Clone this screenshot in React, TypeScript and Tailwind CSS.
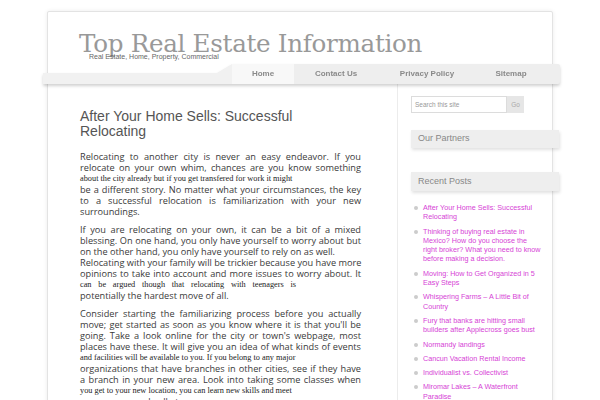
import React from 'react';

type Line = { t: string; k: 'j' | 'l' | 's' | 'sj' };

const PARAGRAPHS: Line[][] = [
  [
    { t: 'Relocating to another city is never an easy endeavor. If you', k: 'j' },
    { t: 'relocate on your own whim, chances are you know something', k: 'j' },
    { t: 'about the city already but if you get transfered for work it might', k: 's' },
    { t: 'be a different story. No matter what your circumstances, the key', k: 'j' },
    { t: 'to a successful relocation is familiarization with your new', k: 'j' },
    { t: 'surroundings.', k: 'l' },
  ],
  [
    { t: 'If you are relocating on your own, it can be a bit of a mixed', k: 'j' },
    { t: 'blessing. On one hand, you only have yourself to worry about but', k: 'j' },
    { t: 'on the other hand, you only have yourself to rely on as well.', k: 'l' },
    { t: 'Relocating with your family will be trickier because you have more', k: 'j' },
    { t: 'opinions to take into account and more issues to worry about. It', k: 'j' },
    { t: 'can be argued though that relocating with teenagers is', k: 'sj' },
    { t: 'potentially the hardest move of all.', k: 'l' },
  ],
  [
    { t: 'Consider starting the familiarizing process before you actually', k: 'j' },
    { t: "move; get started as soon as you know where it is that you'll be", k: 'j' },
    { t: "going. Take a look online for the city or town's webpage, most", k: 'j' },
    { t: 'places have these. It will give you an idea of what kinds of events', k: 'j' },
    { t: 'and facilities will be available to you. If you belong to any major', k: 's' },
    { t: 'organizations that have branches in other cities, see if they have', k: 'j' },
    { t: 'a branch in your new area. Look into taking some classes when', k: 'j' },
    { t: 'you get to your new location, you can learn new skills and meet', k: 's' },
    { t: 'some new people all at once.', k: 'l' },
  ],
];

const RECENT = [
  'After Your Home Sells: Successful Relocating',
  'Thinking of buying real estate in Mexico? How do you choose the right broker? What you need to know before making a decision.',
  'Moving: How to Get Organized in 5 Easy Steps',
  'Whispering Farms – A Little Bit of Country',
  'Fury that banks are hitting small builders after Applecross goes bust',
  'Normandy landings',
  'Cancun Vacation Rental Income',
  'Individualist vs. Collectivist',
  'Miromar Lakes – A Waterfront Paradise',
];

const NAV = [
  { label: 'Home', w: 'w-[62px]', active: true },
  { label: 'Contact Us', w: 'w-[84px]' },
  { label: 'Privacy Policy', w: 'w-[98px]' },
  { label: 'Sitemap', w: 'w-[70px]' },
];

function BodyLine({ line }: { line: Line }) {
  if (line.k === 's' || line.k === 'sj') {
    return (
      <div
        className={
          "h-[11px] leading-[11px] font-['Liberation_Serif',serif] text-[8.3px] text-[#222] whitespace-nowrap " +
          (line.k === 'sj' ? 'w-[216px] text-justify [text-align-last:justify]' : '')
        }
      >
        {line.t}
      </div>
    );
  }
  return (
    <div
      className={
        'h-[11px] leading-[11px] whitespace-nowrap ' +
        (line.k === 'j' ? 'text-justify [text-align-last:justify]' : '')
      }
    >
      {line.t}
    </div>
  );
}

export default function App() {
  return (
    <div className="min-h-screen bg-white pt-[11px] overflow-hidden font-['Liberation_Sans',Arial,sans-serif]">
      <div className="ml-[47px] w-[506px] h-[420px] bg-white border border-[#e3e3e3] rounded-t-[2px] shadow-[0_0_4px_rgba(0,0,0,0.08)]">
        {/* header */}
        <div className="pl-[31px] pt-[17px] h-[52px] relative">
          <div className="font-['DejaVu_Serif',serif] text-[24.6px] leading-[30px] text-[#999] tracking-[-0.3px]">
            Top Real Estate Information
          </div>
          <div className="absolute left-[41px] top-[40px] text-[7px] text-[#666]">
            Real Estate, Home, Property, Commercial
          </div>
        </div>

        {/* nav */}
        <div className="ml-[-5px] mr-[-8px] flex h-[20px] drop-shadow-[0_2px_1.5px_rgba(0,0,0,0.18)]">
          <div className="w-[189px] h-[20px] bg-[#f1f1f1] [clip-path:polygon(0_9px,174px_9px,189px_0,189px_100%,0_100%)]" />
          {NAV.map((n) => (
            <div
              key={n.label}
              className={
                'h-[20px] flex items-center justify-center text-[8px] font-bold text-[#8a8a8a] ' +
                n.w +
                (n.active ? ' bg-[#f8f8f8]' : ' bg-[#eeeeee]')
              }
            >
              {n.label}
            </div>
          ))}
          <div className="flex-1 bg-[#eeeeee] rounded-r-[2px]" />
        </div>

        {/* content */}
        <div className="flex">
          <div className="w-[350px] pl-[32px] pt-[25px]">
            <h2 className="w-[260px] text-[14px] leading-[15px] text-[#555]">
              After Your Home Sells: Successful Relocating
            </h2>
            <div className="mt-[12px] w-[281px] font-['Open_Sans',sans-serif] text-[9.2px] text-[#3a3a3a]">
              {PARAGRAPHS.map((p, i) => (
                <div key={i} className="mb-[7px]">
                  {p.map((l, j) => (
                    <BodyLine key={j} line={l} />
                  ))}
                </div>
              ))}
            </div>
          </div>

          <div className="w-[155px] border-l border-[#ececec] pl-[13px] pt-[12px]">
            <div className="flex h-[17px] w-[113px]">
              <div className="flex-1 border border-[#dcdcdc] bg-white pl-[3px] flex items-center text-[6.5px] text-[#999]">
                Search this site
              </div>
              <div className="w-[17px] bg-[#e6e6e6] flex items-center justify-center text-[6.5px] text-[#aaa]">
                Go
              </div>
            </div>

            <div className="mt-[17px] w-[148px] h-[18px] bg-[#eeeeee] pl-[7px] flex items-center text-[9px] text-[#888] shadow-[1px_2px_3px_rgba(0,0,0,0.12)]">
              Our Partners
            </div>

            <div className="mt-[24px] w-[148px] h-[19px] bg-[#eeeeee] pl-[7px] flex items-center text-[9px] text-[#888] shadow-[1px_2px_3px_rgba(0,0,0,0.12)]">
              Recent Posts
            </div>

            <ul className="mt-[12px] pl-[3px] flex flex-col gap-[5px]">
              {RECENT.map((r) => (
                <li key={r} className="flex items-start gap-[5px]">
                  <span className="mt-[3px] w-[4px] h-[4px] rounded-full bg-[#cccccc] shrink-0" />
                  <span className="w-[118px] text-[7.2px] leading-[9.3px] text-[#d63fd6]">{r}</span>
                </li>
              ))}
            </ul>
          </div>
        </div>
      </div>
    </div>
  );
}
